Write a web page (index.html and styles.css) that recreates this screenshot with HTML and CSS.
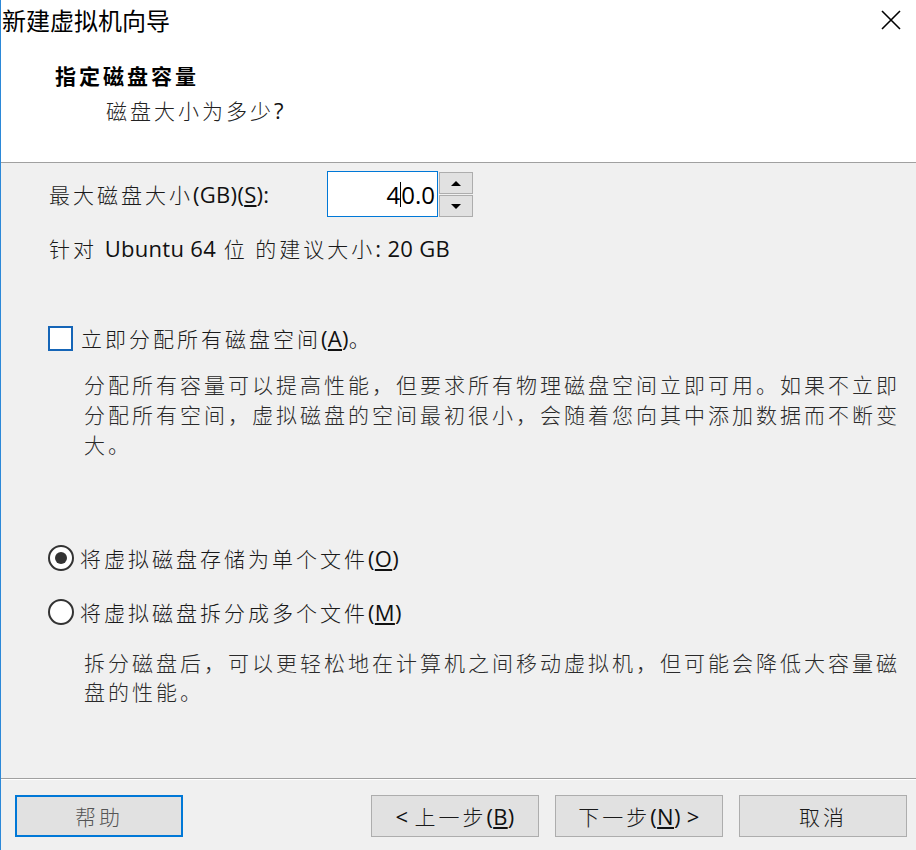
FILE: index.html
```html
<!DOCTYPE html>
<html lang="zh-CN">
<head>
<meta charset="utf-8">
<title>新建虚拟机向导</title>
<link rel="stylesheet" href="styles.css">
</head>
<body>
<div class="window">
  <div class="titlebar">
    <span class="title">新建虚拟机向导</span>
    <svg class="close" width="20" height="20" viewBox="0 0 20 20" aria-label="关闭">
      <path d="M1 1 L19 19 M19 1 L1 19" stroke="#000" stroke-width="1.6" fill="none"/>
    </svg>
  </div>
  <div class="header">
    <div class="h-title">指定磁盘容量</div>
    <div class="h-sub">磁盘大小为多少<span class="lat">?</span></div>
  </div>
  <div class="content">
    <div class="size-row">
      <span class="size-label">最大磁盘大小<span class="lat">(GB)(<u>S</u>):</span></span>
      <div class="spin">
        <div class="spin-input"><span class="num">4</span><span class="caret"></span><span class="num">0.0</span></div>
        <div class="spin-btns">
          <div class="spin-btn"><span class="tri-up"></span></div>
          <div class="spin-btn"><span class="tri-down"></span></div>
        </div>
      </div>
    </div>
    <div class="rec">针对 <span class="lat">Ubuntu 64</span> 位 的建议大小<span class="lat">: 20 GB</span></div>
    <div class="check-row"><span class="checkbox"></span><span>立即分配所有磁盘空间<span class="lat">(<u>A</u>)</span>。</span></div>
    <p class="desc desc1">分配所有容量可以提高性能，但要求所有物理磁盘空间立即可用。如果不立即<br>分配所有空间，虚拟磁盘的空间最初很小，会随着您向其中添加数据而不断变<br>大。</p>
    <div class="radio-row radio1"><span class="radio checked"></span><span>将虚拟磁盘存储为单个文件<span class="lat">(<u>O</u>)</span></span></div>
    <div class="radio-row radio2"><span class="radio"></span><span>将虚拟磁盘拆分成多个文件<span class="lat">(<u>M</u>)</span></span></div>
    <p class="desc desc2">拆分磁盘后，可以更轻松地在计算机之间移动虚拟机，但可能会降低大容量磁<br>盘的性能。</p>
  </div>
  <div class="footer">
    <div class="btn btn-help"><span>帮助</span></div>
    <div class="btn"><span><span class="lat">&lt;&nbsp;</span>上一步<span class="lat">(<u>B</u>)</span></span></div>
    <div class="btn"><span>下一步<span class="lat">(<u>N</u>)&nbsp;&gt;</span></span></div>
    <div class="btn"><span>取消</span></div>
  </div>
</div>
</body>
</html>
```
FILE: styles.css
```css
html, body {
  margin: 0;
  padding: 0;
  background: #f0f0f0;
}

body {
  font-family: "Noto Sans CJK SC", "Open Sans", sans-serif;
  font-size: 21px;
  color: #1a1a1a;
}

.window {
  width: 916px;
  height: 850px;
  box-sizing: border-box;
  border-left: 1px solid #2b88d8;
  display: flex;
  flex-direction: column;
  background: #f0f0f0;
}

.lat {
  font-family: "Open Sans", "Noto Sans CJK SC", sans-serif;
  font-size: 22px;
  font-weight: 400;
  letter-spacing: 0.3px;
  color: #111;
}

/* title bar */
.titlebar {
  height: 40px;
  background: #fff;
  display: flex;
  align-items: center;
  justify-content: space-between;
  padding: 0 15px 0 1px;
}

.title {
  font-size: 24px;
  color: #000;
  line-height: 40px;
}

.close {
  display: block;
}

/* header */
.header {
  height: 123px;
  box-sizing: border-box;
  background: #fff;
  border-bottom: 1px solid #a0a0a0;
  padding-top: 20px;
}

.h-title {
  margin-left: 54px;
  font-size: 21px;
  font-weight: 700;
  letter-spacing: 3px;
  line-height: 30px;
  color: #000;
}

.h-sub {
  margin-left: 105px;
  margin-top: 5px;
  font-size: 21px;
  font-weight: 300;
  letter-spacing: 3px;
  line-height: 30px;
  color: #222;
}

/* content */
.content {
  flex: 1;
  padding-left: 48px;
  font-weight: 300;
  letter-spacing: 3px;
}

.size-row {
  margin-top: 8px;
  height: 46px;
  display: flex;
  align-items: center;
}

.size-label {
  width: 278px;
  line-height: 30px;
}

.spin {
  display: flex;
  height: 46px;
}

.spin-input {
  width: 111px;
  height: 46px;
  box-sizing: border-box;
  border: 1px solid #0078d7;
  background: #fff;
  display: flex;
  align-items: center;
  justify-content: flex-end;
  padding-right: 2px;
  letter-spacing: 0;
}

.num {
  font-family: "Open Sans", sans-serif;
  font-size: 24px;
  font-weight: 400;
  color: #000;
}

.caret {
  display: inline-block;
  width: 1px;
  height: 25px;
  background: #000;
}

.spin-btns {
  display: flex;
  flex-direction: column;
  gap: 1px;
  margin-left: 1px;
  padding-top: 1px;
}

.spin-btn {
  width: 34px;
  height: 22px;
  box-sizing: border-box;
  border: 1px solid #adadad;
  background: #e1e1e1;
  display: flex;
  align-items: center;
  justify-content: center;
}

.tri-up {
  width: 0;
  height: 0;
  border-left: 5px solid transparent;
  border-right: 5px solid transparent;
  border-bottom: 5px solid #000;
}

.tri-down {
  width: 0;
  height: 0;
  border-left: 5px solid transparent;
  border-right: 5px solid transparent;
  border-top: 5px solid #000;
}

.rec {
  margin-top: 16px;
  line-height: 30px;
}

.check-row {
  margin-top: 60px;
  height: 30px;
  display: flex;
  align-items: center;
  margin-left: -1px;
}

.checkbox {
  width: 25px;
  height: 25px;
  box-sizing: border-box;
  border: 2px solid #1565b7;
  background: #fff;
  margin-right: 8px;
  flex: none;
}

.desc {
  margin: 16px 0 0 35px;
  line-height: 30px;
  color: #2a2a2a;
}

.radio-row {
  height: 30px;
  display: flex;
  align-items: center;
  margin-left: -1px;
}

.radio1 {
  margin-top: 84px;
}

.radio2 {
  margin-top: 24px;
}

.radio {
  width: 26px;
  height: 26px;
  box-sizing: border-box;
  border: 2px solid #333;
  border-radius: 50%;
  background: #fff;
  margin-right: 6px;
  flex: none;
  display: flex;
  align-items: center;
  justify-content: center;
}

.radio.checked::after {
  content: "";
  width: 12px;
  height: 12px;
  border-radius: 50%;
  background: #333;
}

.desc2 {
  margin-top: 21px;
  line-height: 29px;
}

/* footer */
.footer {
  height: 72px;
  box-sizing: border-box;
  border-top: 1px solid #a0a0a0;
  box-shadow: inset 0 1px 0 #fff;
  display: flex;
  gap: 16px;
  padding: 16px 9px 0 14px;
  font-weight: 300;
  letter-spacing: 3px;
}

.btn {
  width: 168px;
  height: 42px;
  box-sizing: border-box;
  border: 1px solid #adadad;
  background: #e1e1e1;
  display: flex;
  align-items: center;
  justify-content: center;
  color: #1a1a1a;
}

.btn-help {
  border: 2px solid #0078d7;
  margin-right: auto;
  color: #555;
}
```
